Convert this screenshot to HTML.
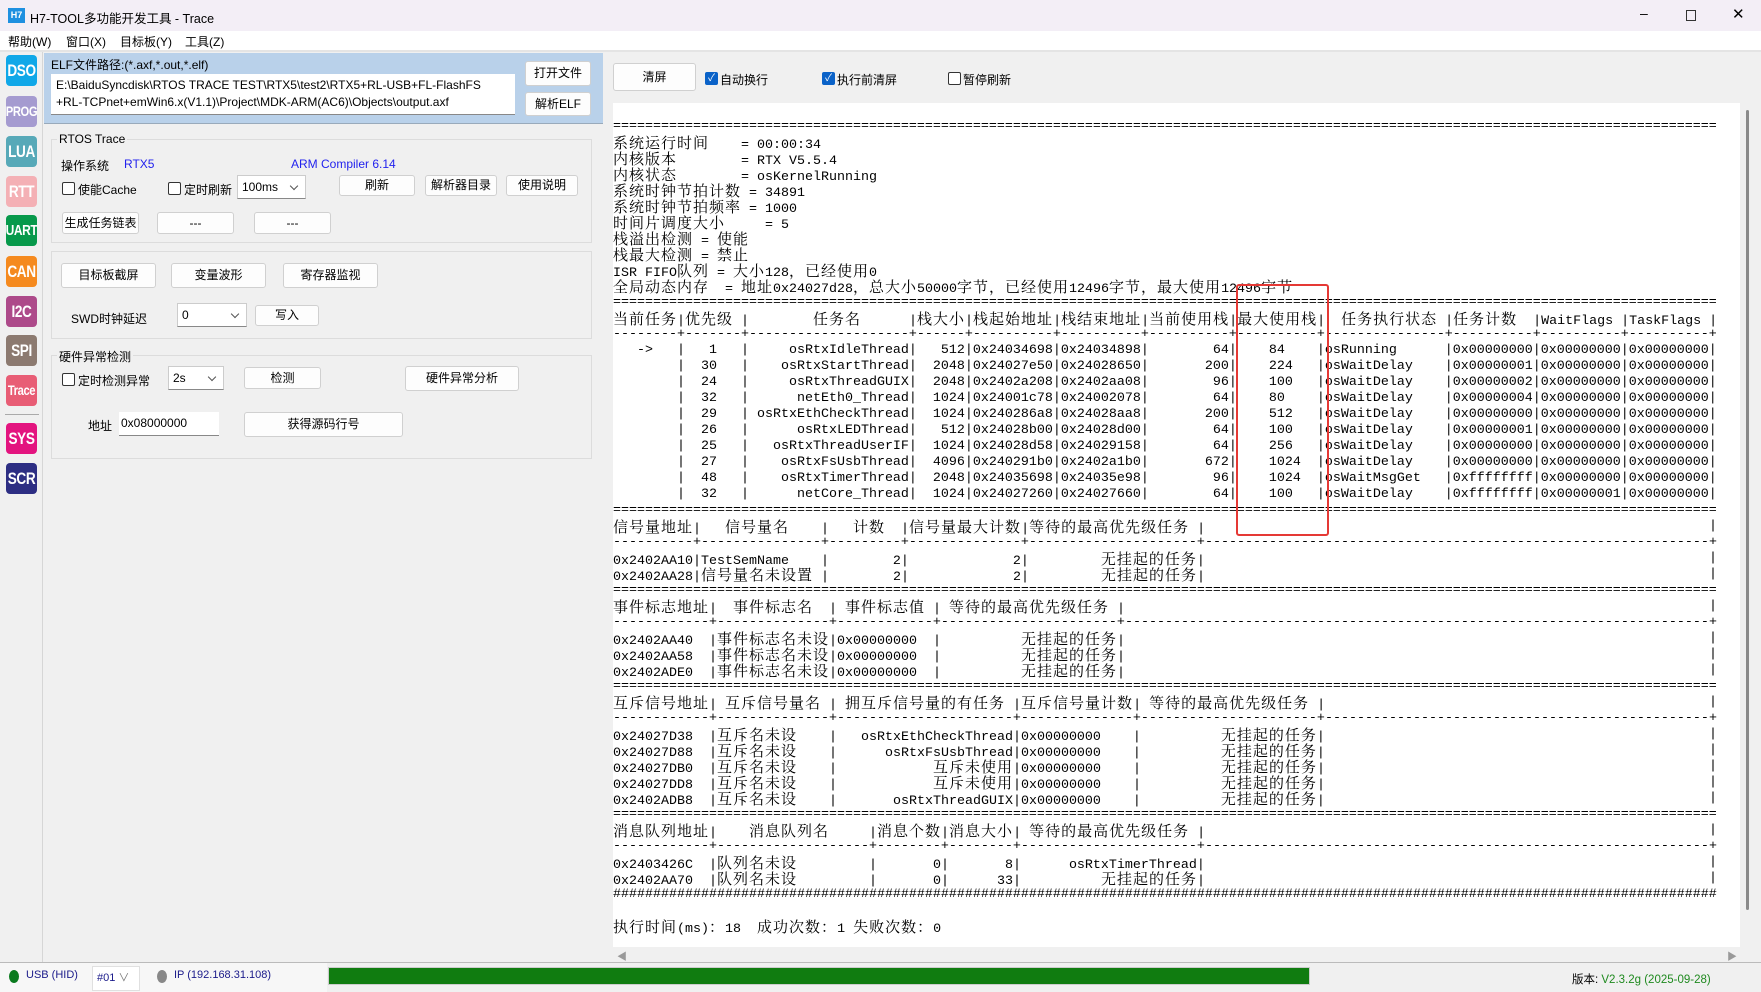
<!DOCTYPE html>
<html><head><meta charset="utf-8">
<style>
*{margin:0;padding:0;box-sizing:border-box}
body{width:1761px;height:992px;overflow:hidden;background:#f0f0f0;position:relative;font-family:"Liberation Sans","Noto Sans CJK SC",sans-serif;font-size:12px;color:#000}
.a{position:absolute}
.ic{position:absolute;left:6px;width:31px;height:31px;border-radius:4px;color:#fff;font:bold 17px/31px "Liberation Sans",sans-serif;text-align:center;letter-spacing:-0.5px;overflow:hidden}
.ic span{display:block;margin:0 -20px;transform:scaleX(.8)}
.btn{position:absolute;background:#fdfdfd;border:1px solid #d0d0d0;border-radius:3px;text-align:center;font-size:12px}
.cb{position:absolute;width:13px;height:13px;border:1px solid #333;border-radius:2px;background:#fff}
.cbc{position:absolute;width:13px;height:13px;border-radius:2px;background:#0a62c8;color:#fff;font-size:10px;line-height:13px;text-align:center}
.combo{position:absolute;background:#fff;border:1px solid #ccc;border-bottom:1px solid #888;font-size:12px;padding-left:4px}
.combo:after{content:"";position:absolute;right:8px;top:7px;width:5px;height:5px;border-right:1px solid #555;border-bottom:1px solid #555;transform:rotate(45deg)}
.grp{position:absolute;border:1px solid #dcdcdc}
.ta{position:absolute;left:613px;top:103px;width:1127px;height:844px;background:#fff;overflow:hidden}
.l{position:relative;height:16px;white-space:pre;font:13.33px/16px "Liberation Mono",monospace;color:#000}
.l b{font:15px/16px "Noto Serif CJK SC","Noto Sans CJK SC",serif;letter-spacing:1px;font-weight:normal}
.l i{position:absolute;top:0;font-style:normal}
.l i.t{overflow:hidden;white-space:pre}
.eq{overflow:hidden;width:1104px}
</style></head><body>
<!-- title bar -->
<div class="a" style="left:0;top:0;width:1761px;height:31px;background:#f3eef6"></div>
<div class="a" style="left:8px;top:8px;width:17px;height:15px;background:#1e90e0;color:#fff;font:bold 9px/15px 'Liberation Sans';text-align:center">H7</div>
<div class="a" style="left:30px;top:8px;font-size:12.5px">H7-TOOL多功能开发工具 - Trace</div>
<div class="a" style="left:1640px;top:5px;font-size:14px">–</div>
<div class="a" style="left:1686px;top:10px;width:10px;height:11px;border:1px solid #333"></div>
<div class="a" style="left:1732px;top:5px;font-size:15px">✕</div>
<!-- menu -->
<div class="a" style="left:0;top:31px;width:1761px;height:19px;background:#fff"></div>
<div class="a" style="left:8px;top:33px">帮助(W)</div>
<div class="a" style="left:66px;top:33px">窗口(X)</div>
<div class="a" style="left:120px;top:33px">目标板(Y)</div>
<div class="a" style="left:185px;top:33px">工具(Z)</div>
<div class="a" style="left:0;top:50px;width:1761px;height:2px;background:#e4e4e4"></div>
<!-- sidebar -->
<div class="a" style="left:42px;top:52px;width:1px;height:910px;background:#d6d6d6"></div>
<div class="ic" style="top:55px;background:#10a8e8"><span>DSO</span></div>
<div class="ic" style="top:96px;background:#a59bd0;font-size:14px"><span>PROG</span></div>
<div class="ic" style="top:136px;background:#57a9b8"><span>LUA</span></div>
<div class="ic" style="top:176px;background:#f4b0b5"><span>RTT</span></div>
<div class="ic" style="top:215px;background:#07994b;font-size:15px"><span>UART</span></div>
<div class="ic" style="top:256px;background:#f58a1f"><span>CAN</span></div>
<div class="ic" style="top:296px;background:#ad4a8a"><span>I2C</span></div>
<div class="ic" style="top:335px;background:#8c7a70"><span>SPI</span></div>
<div class="ic" style="top:375px;background:#e85d75;font-size:14px"><span>Trace</span></div>
<div class="a" style="left:5px;top:414px;width:34px;height:1px;background:#aaa"></div>
<div class="ic" style="top:423px;background:#e3147f"><span>SYS</span></div>
<div class="ic" style="top:463px;background:#2d2e83"><span>SCR</span></div>
<!-- ELF panel -->
<div class="a" style="left:44px;top:53px;width:559px;height:71px;background:#b9d1ea;border-bottom:1px solid #9ab"></div>
<div class="a" style="left:51px;top:56px">ELF文件路径:(*.axf,*.out,*.elf)</div>
<div class="a" style="left:51px;top:74px;width:464px;height:41px;background:#fff;border-bottom:1px solid #888;padding:3px 0 0 5px;font-size:12px;line-height:17px">E:\BaiduSyncdisk\RTOS TRACE TEST\RTX5\test2\RTX5+RL-USB+FL-FlashFS<br>+RL-TCPnet+emWin6.x(V1.1)\Project\MDK-ARM(AC6)\Objects\output.axf</div>
<div class="btn" style="left:525px;top:61px;width:66px;height:25px;line-height:23px">打开文件</div>
<div class="btn" style="left:525px;top:92px;width:66px;height:24px;line-height:22px">解析ELF</div>
<!-- RTOS group -->
<div class="grp" style="left:51px;top:139px;width:541px;height:104px"></div>
<div class="a" style="left:57px;top:132px;background:#f0f0f0;padding:0 2px">RTOS Trace</div>
<div class="a" style="left:61px;top:157px">操作系统</div>
<div class="a" style="left:124px;top:157px;color:#2222ee">RTX5</div>
<div class="a" style="left:291px;top:157px;color:#2222ee">ARM Compiler 6.14</div>
<div class="cb" style="left:62px;top:182px"></div><div class="a" style="left:78px;top:181px">使能Cache</div>
<div class="cb" style="left:168px;top:182px"></div><div class="a" style="left:184px;top:181px">定时刷新</div>
<div class="combo" style="left:237px;top:175px;width:69px;height:24px;line-height:22px">100ms</div>
<div class="btn" style="left:339px;top:175px;width:76px;height:21px;line-height:19px">刷新</div>
<div class="btn" style="left:425px;top:175px;width:72px;height:21px;line-height:19px">解析器目录</div>
<div class="btn" style="left:506px;top:175px;width:72px;height:21px;line-height:19px">使用说明</div>
<div class="btn" style="left:62px;top:212px;width:77px;height:22px;line-height:20px">生成任务链表</div>
<div class="btn" style="left:157px;top:212px;width:77px;height:22px;line-height:20px">---</div>
<div class="btn" style="left:254px;top:212px;width:77px;height:22px;line-height:20px">---</div>
<!-- group 2 -->
<div class="grp" style="left:51px;top:251px;width:541px;height:88px"></div>
<div class="btn" style="left:61px;top:263px;width:95px;height:25px;line-height:23px">目标板截屏</div>
<div class="btn" style="left:171px;top:263px;width:95px;height:25px;line-height:23px">变量波形</div>
<div class="btn" style="left:283px;top:263px;width:95px;height:25px;line-height:23px">寄存器监视</div>
<div class="a" style="left:71px;top:310px">SWD时钟延迟</div>
<div class="combo" style="left:177px;top:303px;width:70px;height:24px;line-height:22px">0</div>
<div class="btn" style="left:255px;top:305px;width:64px;height:21px;line-height:19px">写入</div>
<!-- group 3 -->
<div class="grp" style="left:51px;top:355px;width:541px;height:104px"></div>
<div class="a" style="left:57px;top:348px;background:#f0f0f0;padding:0 2px">硬件异常检测</div>
<div class="cb" style="left:62px;top:373px"></div><div class="a" style="left:78px;top:372px">定时检测异常</div>
<div class="combo" style="left:168px;top:366px;width:56px;height:24px;line-height:22px">2s</div>
<div class="btn" style="left:244px;top:367px;width:77px;height:22px;line-height:20px">检测</div>
<div class="btn" style="left:405px;top:366px;width:114px;height:25px;line-height:23px">硬件异常分析</div>
<div class="a" style="left:88px;top:417px">地址</div>
<div class="a" style="left:119px;top:412px;width:100px;height:24px;background:#fff;border-bottom:1px solid #888;padding:4px 0 0 2px">0x08000000</div>
<div class="btn" style="left:244px;top:412px;width:159px;height:25px;line-height:23px">获得源码行号</div>
<!-- right toolbar -->
<div class="btn" style="left:613px;top:63px;width:83px;height:28px;line-height:26px">清屏</div>
<div class="cbc" style="left:705px;top:72px">✓</div><div class="a" style="left:720px;top:71px">自动换行</div>
<div class="cbc" style="left:822px;top:72px">✓</div><div class="a" style="left:837px;top:71px">执行前清屏</div>
<div class="cb" style="left:948px;top:72px"></div><div class="a" style="left:963px;top:71px">暂停刷新</div>
<!-- text area -->
<div class="ta">
<div class="l"></div>
<div class="l eq">======================================================================================================================================================</div>
<div class="l"><b>系统运行时间</b>    = 00:00:34</div>
<div class="l"><b>内核版本</b>        = RTX V5.5.4</div>
<div class="l"><b>内核状态</b>        = osKernelRunning</div>
<div class="l"><b>系统时钟节拍计数</b> = 34891</div>
<div class="l"><b>系统时钟节拍频率</b> = 1000</div>
<div class="l"><b>时间片调度大小</b>     = 5</div>
<div class="l"><b>栈溢出检测</b> = <b>使能</b></div>
<div class="l"><b>栈最大检测</b> = <b>禁止</b></div>
<div class="l">ISR FIFO<b>队列</b> = <b>大小</b>128<b>，已经使用</b>0</div>
<div class="l"><b>全局动态内存</b>  = <b>地址</b>0x24027d28<b>，总大小</b>50000<b>字节，已经使用</b>12496<b>字节，最大使用</b>12496<b>字节</b></div>
<div class="l eq">======================================================================================================================================================</div>
<div class="l"><b>当前任务</b>|<b>优先级</b> |        <b>任务名</b>      |<b>栈大小</b>|<b>栈起始地址</b>|<b>栈结束地址</b>|<b>当前使用栈</b>|<b>最大使用栈</b>|  <b>任务执行状态</b> |<b>任务计数</b>  |WaitFlags |TaskFlags |</div>
<div class="l">--------+-------+--------------------+------+----------+----------+----------+----------+---------------+----------+----------+----------+</div>
<div class="l">   -&gt;   |   1   |     osRtxIdleThread|   512|0x24034698|0x24034898|        64|    84    |osRunning      |0x00000000|0x00000000|0x00000000|</div>
<div class="l">        |  30   |    osRtxStartThread|  2048|0x24027e50|0x24028650|       200|    224   |osWaitDelay    |0x00000001|0x00000000|0x00000000|</div>
<div class="l">        |  24   |     osRtxThreadGUIX|  2048|0x2402a208|0x2402aa08|        96|    100   |osWaitDelay    |0x00000002|0x00000000|0x00000000|</div>
<div class="l">        |  32   |      netEth0_Thread|  1024|0x24001c78|0x24002078|        64|    80    |osWaitDelay    |0x00000004|0x00000000|0x00000000|</div>
<div class="l">        |  29   | osRtxEthCheckThread|  1024|0x240286a8|0x24028aa8|       200|    512   |osWaitDelay    |0x00000000|0x00000000|0x00000000|</div>
<div class="l">        |  26   |      osRtxLEDThread|   512|0x24028b00|0x24028d00|        64|    100   |osWaitDelay    |0x00000001|0x00000000|0x00000000|</div>
<div class="l">        |  25   |   osRtxThreadUserIF|  1024|0x24028d58|0x24029158|        64|    256   |osWaitDelay    |0x00000000|0x00000000|0x00000000|</div>
<div class="l">        |  27   |    osRtxFsUsbThread|  4096|0x240291b0|0x2402a1b0|       672|    1024  |osWaitDelay    |0x00000000|0x00000000|0x00000000|</div>
<div class="l">        |  48   |    osRtxTimerThread|  2048|0x24035698|0x24035e98|        96|    1024  |osWaitMsgGet   |0xffffffff|0x00000000|0x00000000|</div>
<div class="l">        |  32   |      netCore_Thread|  1024|0x24027260|0x24027660|        64|    100   |osWaitDelay    |0xffffffff|0x00000001|0x00000000|</div>
<div class="l eq">======================================================================================================================================================</div>
<div class="l"><b>信号量地址</b>|   <b>信号量名</b>    |   <b>计数</b>  |<b>信号量最大计数</b>|<b>等待的最高优先级任务</b> |<i style="left:1096px">|</i></div>
<div class="l">----------+---------------+---------+--------------+---------------------+<i class="t" style="left:592px;width:504px">----------------------------------------------------------------------</i><i style="left:1096px">+</i></div>
<div class="l">0x2402AA10|TestSemName    |        2|             2|         <b>无挂起的任务</b>|<i style="left:1096px">|</i></div>
<div class="l">0x2402AA28|<b>信号量名未设置</b> |        2|             2|         <b>无挂起的任务</b>|<i style="left:1096px">|</i></div>
<div class="l eq">======================================================================================================================================================</div>
<div class="l"><b>事件标志地址</b>|  <b>事件标志名</b>  | <b>事件标志值</b> | <b>等待的最高优先级任务</b> |<i style="left:1096px">|</i></div>
<div class="l">------------+--------------+------------+----------------------+<i class="t" style="left:512px;width:584px">------------------------------------------------------------------------------</i><i style="left:1096px">+</i></div>
<div class="l">0x2402AA40  |<b>事件标志名未设</b>|0x00000000  |          <b>无挂起的任务</b>|<i style="left:1096px">|</i></div>
<div class="l">0x2402AA58  |<b>事件标志名未设</b>|0x00000000  |          <b>无挂起的任务</b>|<i style="left:1096px">|</i></div>
<div class="l">0x2402ADE0  |<b>事件标志名未设</b>|0x00000000  |          <b>无挂起的任务</b>|<i style="left:1096px">|</i></div>
<div class="l eq">======================================================================================================================================================</div>
<div class="l"><b>互斥信号地址</b>| <b>互斥信号量名</b> | <b>拥互斥信号量的有任务</b> |<b>互斥信号量计数</b>| <b>等待的最高优先级任务</b> |<i style="left:1096px">|</i></div>
<div class="l">------------+--------------+----------------------+--------------+----------------------+<i class="t" style="left:712px;width:384px">------------------------------------------------------</i><i style="left:1096px">+</i></div>
<div class="l">0x24027D38  |<b>互斥名未设</b>    |   osRtxEthCheckThread|0x00000000    |          <b>无挂起的任务</b>|<i style="left:1096px">|</i></div>
<div class="l">0x24027D88  |<b>互斥名未设</b>    |      osRtxFsUsbThread|0x00000000    |          <b>无挂起的任务</b>|<i style="left:1096px">|</i></div>
<div class="l">0x24027DB0  |<b>互斥名未设</b>    |            <b>互斥未使用</b>|0x00000000    |          <b>无挂起的任务</b>|<i style="left:1096px">|</i></div>
<div class="l">0x24027DD8  |<b>互斥名未设</b>    |            <b>互斥未使用</b>|0x00000000    |          <b>无挂起的任务</b>|<i style="left:1096px">|</i></div>
<div class="l">0x2402ADB8  |<b>互斥名未设</b>    |       osRtxThreadGUIX|0x00000000    |          <b>无挂起的任务</b>|<i style="left:1096px">|</i></div>
<div class="l eq">======================================================================================================================================================</div>
<div class="l"><b>消息队列地址</b>|    <b>消息队列名</b>     |<b>消息个数</b>|<b>消息大小</b>| <b>等待的最高优先级任务</b> |<i style="left:1096px">|</i></div>
<div class="l">------------+-------------------+--------+--------+----------------------+<i class="t" style="left:592px;width:504px">----------------------------------------------------------------------</i><i style="left:1096px">+</i></div>
<div class="l">0x2403426C  |<b>队列名未设</b>         |       0|       8|      osRtxTimerThread|<i style="left:1096px">|</i></div>
<div class="l">0x2402AA70  |<b>队列名未设</b>         |       0|      33|          <b>无挂起的任务</b>|<i style="left:1096px">|</i></div>
<div class="l eq">######################################################################################################################################################</div>
<div class="l"></div>
<div class="l"><b>执行时间</b>(ms)<b>：</b>18  <b>成功次数</b><b>：</b>1 <b>失败次数</b><b>：</b>0</div>
</div>
<!-- red highlight -->
<div class="a" style="left:1236px;top:284px;width:93px;height:252px;border:2px solid #e53935;border-radius:3px"></div>
<!-- scrollbars -->
<div class="a" style="left:1746px;top:110px;width:3px;height:800px;background:#8a8a8a;border-radius:2px"></div>
<div class="a" style="left:617px;top:948px;color:#999;font-size:10px">◀</div>
<div class="a" style="left:1727px;top:948px;color:#999;font-size:10px">▶</div>
<!-- status bar -->
<div class="a" style="left:0;top:962px;width:1761px;height:1px;background:#bbb"></div>
<div class="a" style="left:0;top:963px;width:1761px;height:29px;background:#f0f0f0"></div>
<div class="a" style="left:0;top:963px;width:327px;height:29px;background:#f7f7f7"></div>
<div class="a" style="left:9px;top:970px;width:10px;height:13px;border-radius:50%;background:#0a7a1e"></div>
<div class="a" style="left:26px;top:969px;color:#1a1a8a;font-size:11px">USB (HID)</div>
<div class="a" style="left:92px;top:966px;width:48px;height:25px;background:#fff;border:1px solid #e0e0e0;font-size:11px;line-height:23px;padding-left:4px;color:#1a1a8a">#01 <span style="color:#777">∨</span></div>
<div class="a" style="left:157px;top:970px;width:10px;height:13px;border-radius:50%;background:#888"></div>
<div class="a" style="left:174px;top:969px;color:#1a1a8a;font-size:11px">IP (192.168.31.108)</div>
<div class="a" style="left:328px;top:967px;width:982px;height:18px;background:#107c10;border:1px solid #ccc"></div>
<div class="a" style="left:1572px;top:971px;font-size:11.5px">版本: <span style="color:#1f8a1f">V2.3.2g (2025-09-28)</span></div>
</body></html>
